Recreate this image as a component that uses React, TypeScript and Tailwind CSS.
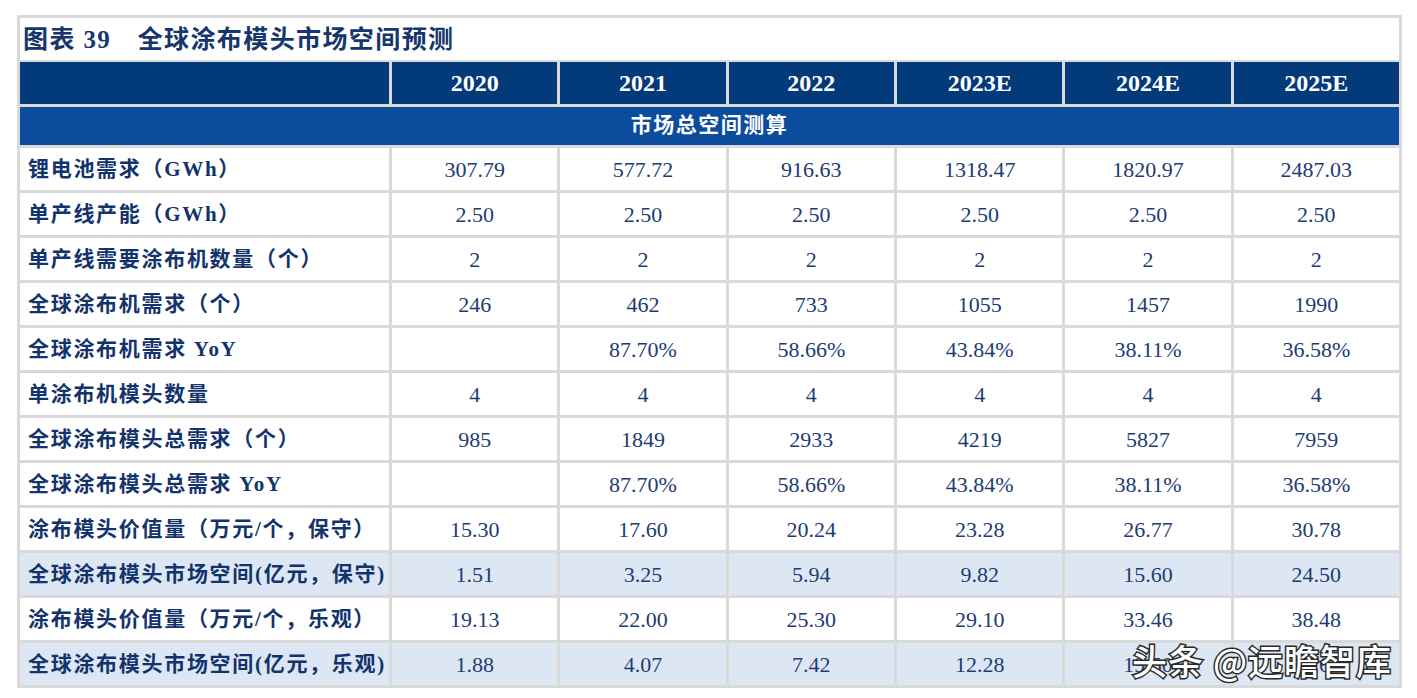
const years = ["2020", "2021", "2022", "2023E", "2024E", "2025E"];

type Row = { label: string; values: string[]; hl?: boolean };

const pct = ["", "87.70%", "58.66%", "43.84%", "38.11%", "36.58%"];

const rows: Row[] = [
  { label: "锂电池需求（GWh）", values: ["307.79", "577.72", "916.63", "1318.47", "1820.97", "2487.03"] },
  { label: "单产线产能（GWh）", values: ["2.50", "2.50", "2.50", "2.50", "2.50", "2.50"] },
  { label: "单产线需要涂布机数量（个）", values: ["2", "2", "2", "2", "2", "2"] },
  { label: "全球涂布机需求（个）", values: ["246", "462", "733", "1055", "1457", "1990"] },
  { label: "全球涂布机需求 YoY", values: pct },
  { label: "单涂布机模头数量", values: ["4", "4", "4", "4", "4", "4"] },
  { label: "全球涂布模头总需求（个）", values: ["985", "1849", "2933", "4219", "5827", "7959"] },
  { label: "全球涂布模头总需求 YoY", values: pct },
  { label: "涂布模头价值量（万元/个，保守）", values: ["15.30", "17.60", "20.24", "23.28", "26.77", "30.78"] },
  { label: "全球涂布模头市场空间(亿元，保守)", values: ["1.51", "3.25", "5.94", "9.82", "15.60", "24.50"], hl: true },
  { label: "涂布模头价值量（万元/个，乐观）", values: ["19.13", "22.00", "25.30", "29.10", "33.46", "38.48"] },
  { label: "全球涂布模头市场空间(亿元，乐观)", values: ["1.88", "4.07", "7.42", "12.28", "19.50", "30.63"], hl: true },
];

const serif = "font-['Liberation_Serif','Noto_Sans_CJK_SC',serif]";

export default function App() {
  return (
    <div className="relative h-[698px] w-[1417px] overflow-hidden bg-white">
      <div className={`ml-[17px] mt-[15px] w-[1385px] bg-[#d9d9d9] p-[3px] ${serif}`}>
        <div className="flex h-[42px] items-center bg-white pl-[3px] pt-[1px] text-[25px] font-bold tracking-[1.4px] text-[#16366e] whitespace-nowrap">
          图表 39　全球涂布模头市场空间预测
        </div>
        <div className="mt-[2px] grid grid-cols-[369px_repeat(6,1fr)] gap-[3px]">
          <div className="h-[42px] bg-[#033a7a]" />
          {years.map((y) => (
            <div
              key={y}
              className="flex h-[42px] items-center justify-center bg-[#033a7a] text-[24px] font-bold text-white"
            >
              {y}
            </div>
          ))}
          <div className="col-span-7 flex h-[38px] items-center justify-center bg-[#0b4c9d] text-[21px] font-bold tracking-[1.5px] text-white">
            市场总空间测算
          </div>
          {rows.map((r) => (
            <RowCells key={r.label} row={r} />
          ))}
        </div>
      </div>
      <div className="absolute left-[1132px] top-[642px] font-['Noto_Sans_CJK_SC',sans-serif] text-[35px] font-medium leading-none tracking-[1px] whitespace-nowrap text-white [-webkit-text-stroke:3px_#2a2a2a] [paint-order:stroke_fill]">
        头条 @远瞻智库
      </div>
    </div>
  );
}

function RowCells({ row }: { row: Row }) {
  const bg = row.hl ? "bg-[#dde7f3]" : "bg-white";
  return (
    <>
      <div
        className={`flex h-[42px] items-center pl-[8px] pt-[2px] text-[21px] font-bold tracking-[1.7px] whitespace-nowrap text-[#13336c] ${bg}`}
      >
        {row.label}
      </div>
      {row.values.map((v, i) => (
        <div
          key={i}
          className={`flex h-[42px] items-center justify-center text-[22px] text-[#1d3c75] ${bg}`}
        >
          {v}
        </div>
      ))}
    </>
  );
}
